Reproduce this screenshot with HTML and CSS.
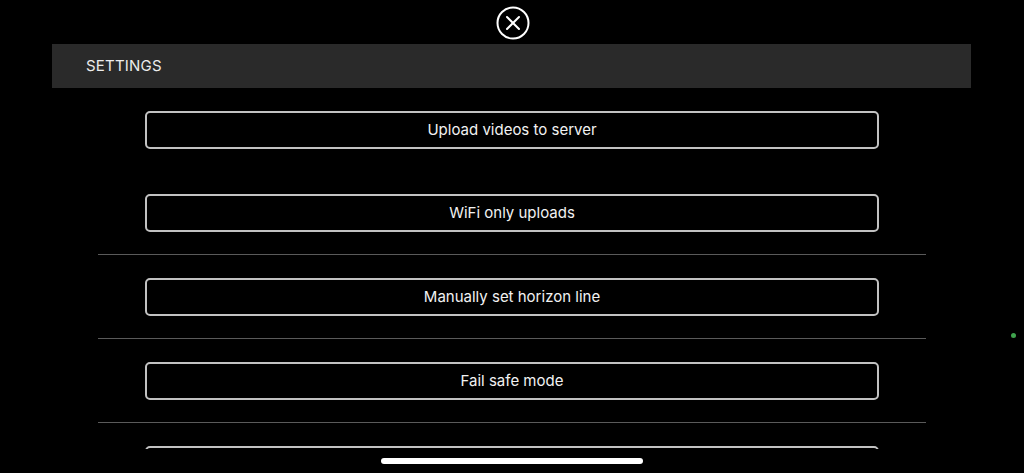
FILE: index.html
```html
<!DOCTYPE html>
<html lang="en">
<head>
    <meta charset="UTF-8">
    <meta name="viewport" content="width=device-width, initial-scale=1.0">
    <title>Settings</title>
    <link rel="stylesheet" href="styles.css">
</head>
<body>
    <div class="top">
        <button class="close-button" aria-label="Close">
            <svg width="34" height="34" viewBox="0 0 34 34">
                <circle cx="17" cy="17" r="15.5" fill="none" stroke="#ffffff" stroke-width="2"/>
                <path d="M11 11 L23 23 M23 11 L11 23" stroke="#ffffff" stroke-width="2" stroke-linecap="round"/>
            </svg>
        </button>
    </div>

    <div class="panel">
        <div class="panel-header">SETTINGS</div>

        <!-- Lijst met instellingen -->
        <div class="settings-list">
            <div class="row">
                <button class="option">Upload videos to server</button>
            </div>
            <div class="row">
                <button class="option">WiFi only uploads</button>
            </div>
            <div class="row separated">
                <button class="option">Manually set horizon line</button>
            </div>
            <div class="row separated">
                <button class="option">Fail safe mode</button>
            </div>
            <div class="row separated">
                <button class="option" aria-label="More settings"></button>
            </div>
        </div>
    </div>

    <div class="status-dot"></div>
    <div class="home-indicator"></div>
</body>
</html>
```

FILE: styles.css
```css
body {
    font-family: Inter, "Noto Sans", Arial, sans-serif;
    background-color: #000000;
    color: #ffffff;
    margin: 0;
    height: 473px;
    overflow: hidden;
}
.top {
    height: 44px;
    display: flex;
    justify-content: center;
    align-items: center;
}
.close-button {
    width: 34px;
    height: 34px;
    padding: 0;
    margin: 1px 0 0 1px;
    background: none;
    border: none;
    cursor: pointer;
}
.close-button svg {
    display: block;
}
.panel {
    margin: 0 53px 0 52px;
}
.panel-header {
    height: 44px;
    background-color: #2a2a2a;
    color: #ececec;
    font-size: 15px;
    line-height: 44px;
    padding-left: 34px;
    letter-spacing: 0.2px;
}
.settings-list {
    height: 361px;
    overflow: hidden;
    margin: 0 45px 0 46px;
}
.row {
    padding: 23px 47px 22px;
}
.row.separated {
    border-top: 1px solid #5a5a5a;
}
.option {
    display: block;
    width: 100%;
    height: 38px;
    padding: 0 0 2px;
    background-color: #000000;
    color: #f2f2f2;
    border: 2px solid #c2c2c2;
    border-radius: 5px;
    font-family: Inter, "Noto Sans", Arial, sans-serif;
    font-size: 15px;
    cursor: pointer;
}
.status-dot {
    position: absolute;
    left: 1011px;
    top: 333px;
    width: 5px;
    height: 5px;
    border-radius: 50%;
    background-color: #3fa34d;
}
.home-indicator {
    position: absolute;
    left: 381px;
    top: 458px;
    width: 262px;
    height: 6px;
    border-radius: 3px;
    background-color: #ffffff;
}
```
